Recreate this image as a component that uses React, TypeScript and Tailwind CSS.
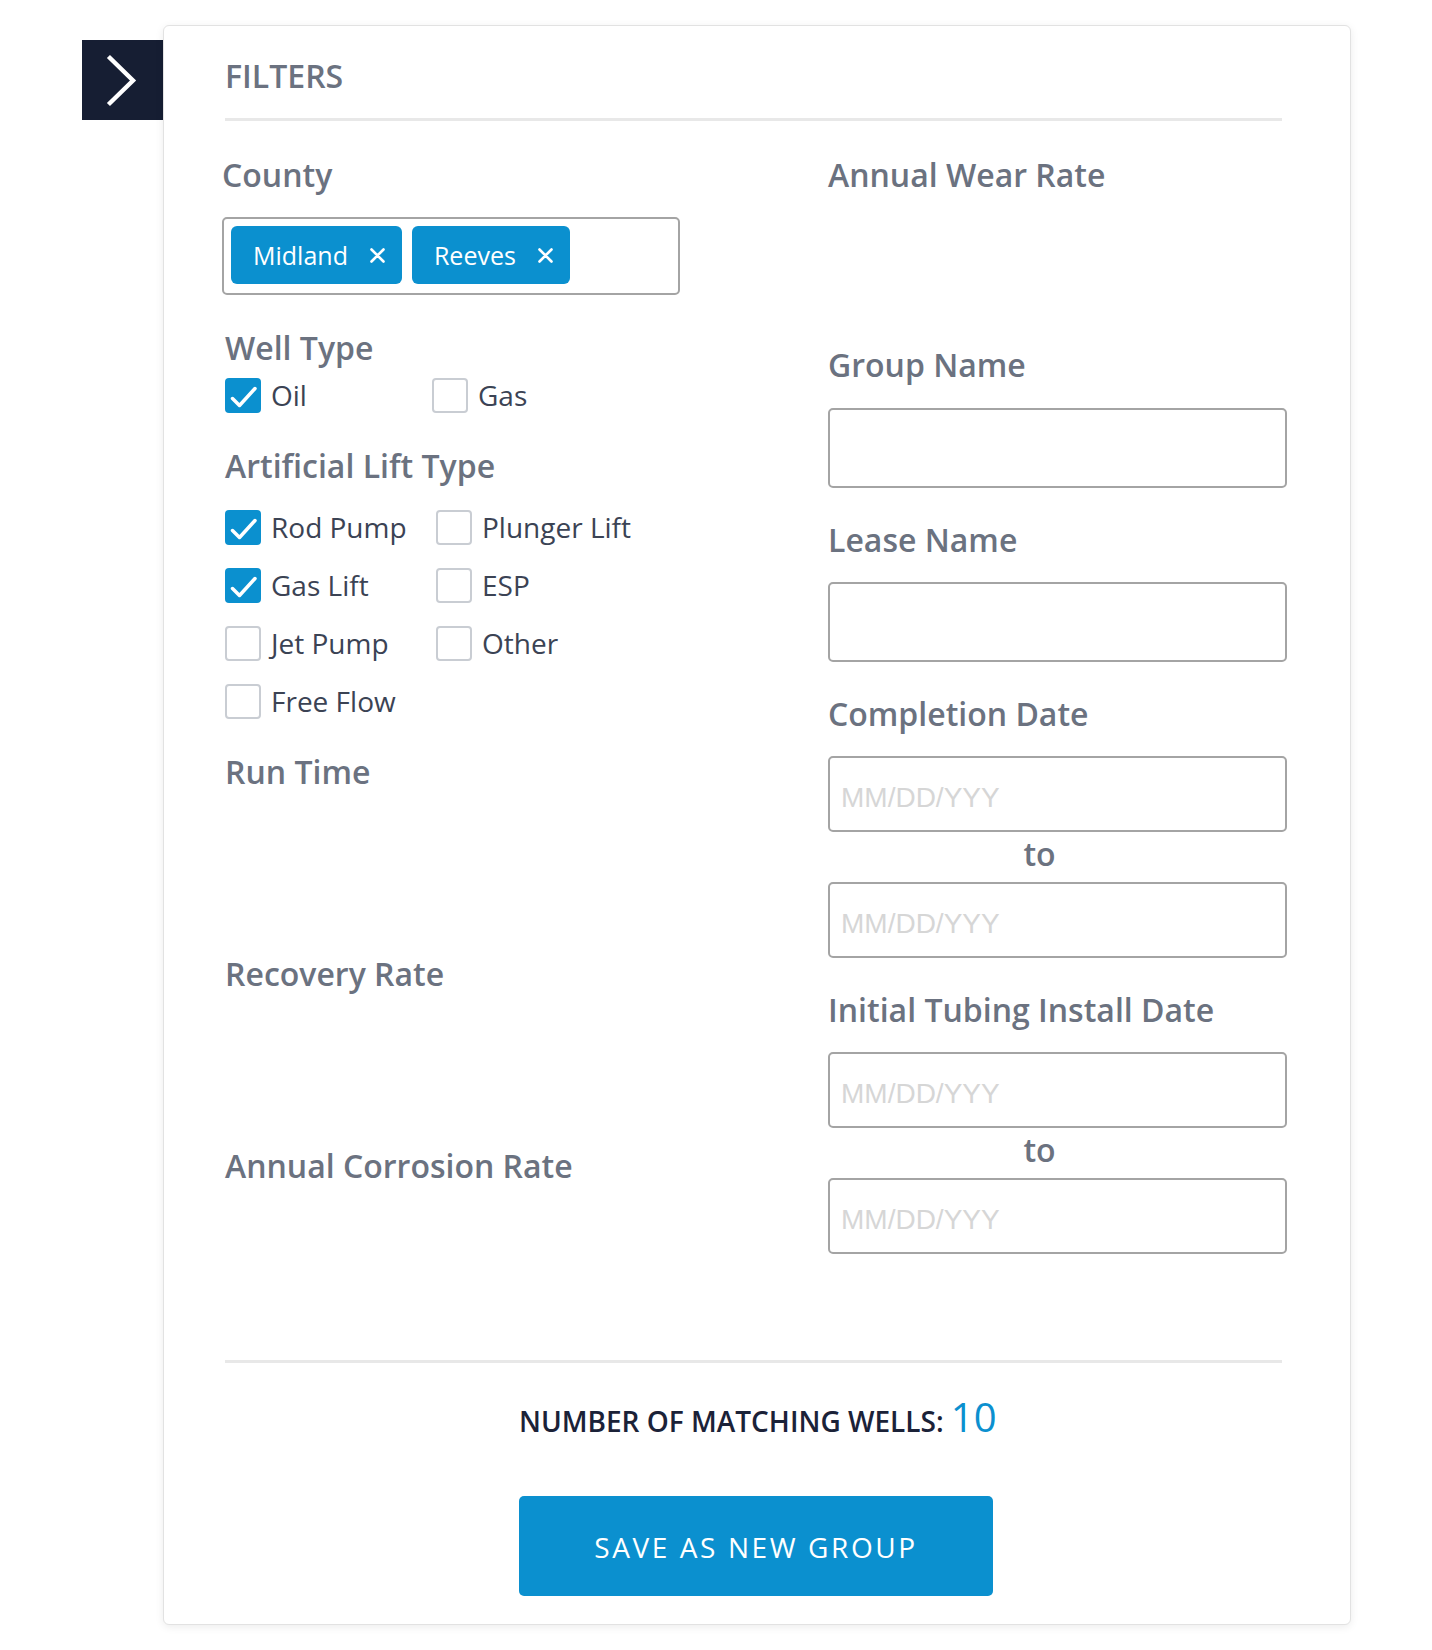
import React from "react";

const Box = ({ checked }: { checked: boolean }) =>
  checked ? (
    <span className="flex h-[35px] w-[36px] shrink-0 items-center justify-center rounded-[4px] bg-[#0b90cf]">
      <svg width="36" height="35" viewBox="0 0 36 35">
        <path d="M7.5 20.5 L14.5 27.5 L30 10.5" fill="none" stroke="white" strokeWidth="3.5" strokeLinecap="round" strokeLinejoin="round" />
      </svg>
    </span>
  ) : (
    <span className="block h-[35px] w-[36px] shrink-0 rounded-[4px] border-2 border-[#c9cdd3] bg-white" />
  );

const Opt = ({ label, checked = false }: { label: string; checked?: boolean }) => (
  <div className="flex h-[35px] items-center gap-[10px]">
    <Box checked={checked} />
    <span className="whitespace-nowrap text-[28px] leading-[35px] text-[#3b4354]">{label}</span>
  </div>
);

const Label = ({ children, className = "" }: { children: React.ReactNode; className?: string }) => (
  <div className={"whitespace-nowrap text-[32px] font-semibold leading-[40px] text-[#6b7280] " + className}>{children}</div>
);

const TextBox = ({ className = "" }: { className?: string }) => (
  <input
    type="text"
    className={"block h-[80px] w-[459px] rounded-[5px] border-2 border-[#a4a4a4] bg-white px-[11px] outline-none " + className}
  />
);

const DateBox = () => (
  <input
    type="text"
    placeholder="MM/DD/YYY"
    className="block h-[76px] w-[459px] rounded-[5px] border-2 border-[#a4a4a4] bg-white px-[11px] pt-[8px] font-['Liberation_Sans',Arial,sans-serif] text-[28px] text-[#3b4354] outline-none placeholder:text-[#d6d6d6]"
  />
);

const To = () => (
  <div className="h-[50px] w-[423px] text-center text-[32px] font-semibold leading-[43px] text-[#6b7280]">to</div>
);

const Chip = ({ label }: { label: string }) => (
  <div className="flex h-[58px] items-center rounded-[6px] bg-[#0b90cf] pl-[22px] pr-[17px] text-white">
    <span className="text-[25px] leading-[30px]">{label}</span>
    <svg className="ml-[22px]" width="15" height="15" viewBox="0 0 15 15">
      <path d="M1.5 1.5 L13.5 13.5 M13.5 1.5 L1.5 13.5" stroke="white" strokeWidth="2.6" strokeLinecap="round" />
    </svg>
  </div>
);

export default function App() {
  return (
    <div className="min-h-[1650px] bg-white font-['Open_Sans',sans-serif]">
      <div className="flex items-start pl-[82px] pt-[25px]">
        <div className="mt-[15px] flex h-[80px] w-[81px] shrink-0 items-center justify-center bg-[#161e33]">
          <svg width="80" height="80" viewBox="0 0 80 80">
            <polyline points="27,18 50,40.5 27,63" fill="none" stroke="white" strokeWidth="4.4" strokeLinecap="square" />
          </svg>
        </div>
        <div className="w-[1188px] shrink-0 rounded-[6px] border border-[#e2e2e2] bg-white pb-[28px] pl-[61px] pr-[68px] pt-[30px] shadow-[0_2px_8px_rgba(0,0,0,0.08)]">
          <div className="text-[32px] font-semibold leading-[40px] text-[#6b7280]">FILTERS</div>
          <div className="mt-[22px] h-[3px] w-[1057px] bg-[#e8e8e8]" />

          <div className="grid grid-cols-[603px_459px] pt-[34px]">
            {/* Left column */}
            <div className="flex flex-col">
              <div className="-ml-[3px]">
                <Label>County</Label>
                <div className="mt-[22px] flex h-[78px] w-[458px] items-start gap-[10px] rounded-[5px] border-2 border-[#a4a4a4] pl-[7px] pt-[7px]">
                  <Chip label="Midland" />
                  <Chip label="Reeves" />
                </div>
              </div>

              <Label className="mt-[33px]">Well Type</Label>
              <div className="mt-[10px] grid grid-cols-[207px_auto]">
                <Opt label="Oil" checked />
                <Opt label="Gas" />
              </div>

              <Label className="mt-[33px]">Artificial Lift Type</Label>
              <div className="mt-[24px] grid grid-cols-[211px_auto] gap-y-[23px]">
                <Opt label="Rod Pump" checked />
                <Opt label="Plunger Lift" />
                <Opt label="Gas Lift" checked />
                <Opt label="ESP" />
                <Opt label="Jet Pump" />
                <Opt label="Other" />
                <Opt label="Free Flow" />
              </div>

              <Label className="mt-[33px]">Run Time</Label>
              <Label className="mt-[162px]">Recovery Rate</Label>
              <Label className="mt-[152px]">Annual Corrosion Rate</Label>
            </div>

            {/* Right column */}
            <div className="flex flex-col">
              <Label>Annual Wear Rate</Label>

              <Label className="mt-[150px]">Group Name</Label>
              <TextBox className="mt-[23px]" />

              <Label className="mt-[32px]">Lease Name</Label>
              <TextBox className="mt-[22px]" />

              <Label className="mt-[32px]">Completion Date</Label>
              <div className="mt-[22px]">
                <DateBox />
                <To />
                <DateBox />
              </div>

              <Label className="mt-[32px]">Initial Tubing Install Date</Label>
              <div className="mt-[22px]">
                <DateBox />
                <To />
                <DateBox />
              </div>
            </div>
          </div>

          <div className="mt-[106px] h-[3px] w-[1057px] bg-[#e8e8e8]" />

          <div className="ml-[294px] w-[474px]">
            <div className="mt-[40px] whitespace-nowrap text-center text-[28px] font-semibold leading-[36px] text-[#1b2238]">
              NUMBER OF MATCHING WELLS:{" "}
              <span className="text-[40px] font-normal leading-[0px] text-[#0b90cf]">10</span>
            </div>
            <button className="mt-[57px] flex h-[100px] w-[474px] items-center justify-center rounded-[5px] bg-[#0b90cf] pt-[2px] text-[28px] tracking-[2.6px] text-white">
              SAVE AS NEW GROUP
            </button>
          </div>
        </div>
      </div>
    </div>
  );
}
